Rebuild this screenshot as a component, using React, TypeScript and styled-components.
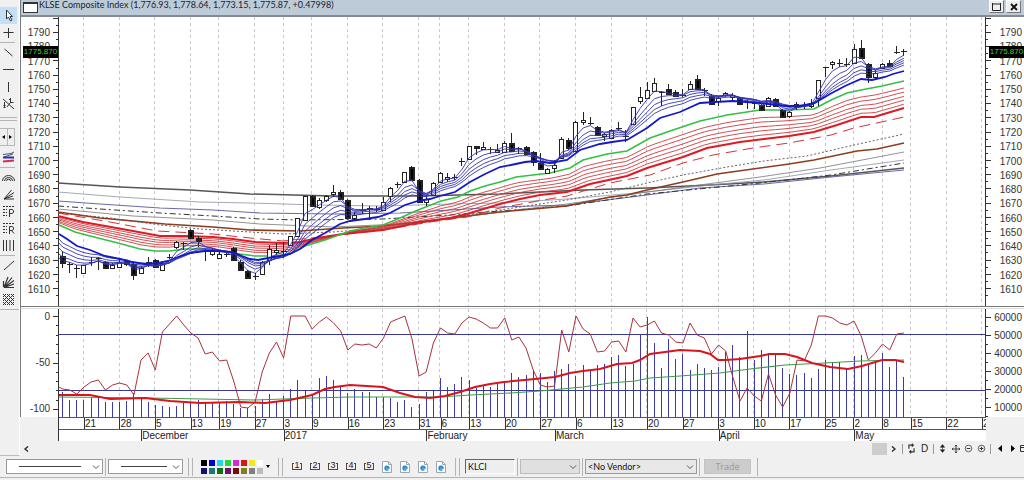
import React from 'react';
import styled, { createGlobalStyle, css } from 'styled-components';

/* ---------- chart data ---------- */

const FIRST_X = 62.6;
const BAR = 7.13;
const xOf = (i: number) => FIRST_X + i * BAR;

// [body top, body bottom, wick top, wick bottom, filled]
type Candle = [number, number, number, number, number];
const candles: Candle[] = [
  [256, 263, 251, 268, 1], [264, 264, 262, 273, 0], [268, 268, 265, 278, 0], [265, 273, 265, 273, 0],
  [262, 262, 257, 266, 0], [258, 258, 257, 270, 0], [262, 268, 261, 269, 1], [265, 268, 263, 269, 0],
  [262, 267, 258, 268, 0], [261, 264, 260, 266, 1], [264, 275, 263, 280, 1], [268, 273, 266, 274, 0],
  [262, 262, 257, 267, 0], [260, 267, 259, 268, 1], [263, 270, 262, 270, 0], [257, 257, 254, 259, 0],
  [242, 247, 241, 249, 0], [243, 244, 242, 250, 0], [230, 238, 229, 239, 1], [238, 241, 236, 247, 1],
  [251, 251, 249, 261, 0], [250, 254, 248, 256, 0], [254, 258, 252, 259, 0], [254, 255, 252, 257, 0],
  [248, 260, 247, 261, 1], [262, 270, 260, 271, 1], [271, 278, 270, 279, 1], [276, 276, 273, 280, 0],
  [262, 274, 261, 275, 0], [249, 260, 245, 265, 0], [250, 252, 243, 255, 0], [251, 251, 242, 258, 0],
  [236, 245, 236, 246, 0], [218, 236, 218, 237, 0], [196, 220, 196, 220, 0], [196, 206, 195, 207, 1],
  [200, 207, 198, 209, 0], [196, 200, 195, 202, 0], [192, 194, 185, 197, 0], [192, 199, 190, 200, 1],
  [200, 218, 199, 219, 1], [215, 218, 212, 221, 0], [210, 210, 203, 214, 0], [208, 208, 206, 220, 0],
  [209, 210, 206, 212, 0], [202, 210, 197, 211, 0], [188, 196, 187, 202, 0], [184, 185, 182, 188, 0],
  [172, 182, 172, 183, 0], [167, 180, 166, 181, 1], [180, 202, 179, 203, 1], [199, 202, 196, 206, 0],
  [183, 195, 182, 196, 0], [173, 182, 172, 183, 0], [177, 179, 173, 182, 0], [177, 178, 174, 180, 0],
  [161, 162, 158, 166, 0], [146, 159, 146, 160, 0], [146, 148, 146, 155, 1], [147, 149, 142, 150, 0],
  [149, 149, 147, 154, 0], [150, 152, 144, 153, 0], [143, 152, 141, 153, 0], [143, 151, 133, 152, 1],
  [148, 149, 147, 154, 0], [147, 154, 146, 155, 1], [152, 162, 151, 166, 1], [163, 169, 153, 170, 1],
  [169, 173, 168, 174, 0], [165, 168, 160, 173, 0], [139, 158, 137, 159, 0], [140, 148, 138, 150, 1],
  [122, 151, 121, 152, 0], [120, 122, 112, 125, 0], [123, 123, 117, 125, 0], [127, 135, 126, 136, 1],
  [134, 136, 133, 141, 0], [130, 138, 129, 138, 0], [128, 129, 122, 131, 0], [136, 137, 130, 142, 0],
  [107, 124, 107, 125, 0], [97, 101, 87, 104, 0], [90, 98, 82, 99, 0], [83, 91, 78, 92, 0],
  [92, 92, 91, 106, 0], [89, 94, 84, 95, 1], [92, 96, 90, 97, 1], [95, 95, 89, 97, 0],
  [84, 89, 81, 90, 0], [79, 89, 75, 90, 1], [90, 90, 88, 96, 0], [96, 104, 94, 104, 1],
  [98, 101, 96, 106, 0], [93, 95, 92, 97, 0], [95, 97, 93, 100, 0], [98, 104, 97, 105, 1],
  [102, 102, 100, 109, 0], [103, 103, 101, 109, 0], [105, 110, 104, 111, 1], [98, 106, 97, 107, 0],
  [99, 106, 98, 107, 1], [110, 117, 109, 117, 1], [112, 116, 111, 118, 0], [104, 107, 102, 110, 0],
  [105, 105, 102, 109, 0], [103, 106, 99, 108, 0], [80, 98, 80, 106, 0], [67, 68, 67, 77, 0],
  [62, 64, 61, 69, 0], [63, 63, 59, 67, 0], [64, 64, 58, 67, 0], [49, 63, 44, 64, 0],
  [48, 58, 40, 59, 1], [64, 77, 63, 83, 1], [73, 77, 70, 79, 0], [64, 68, 63, 69, 0],
  [63, 66, 60, 67, 1], [52, 53, 46, 54, 0], [51, 52, 49, 56, 0],
];

const oscillator = [
  389, 390, 394, 387, 382, 380, 390, 385, 383, 385, 395, 360, 353, 370, 332, 324, 316, 325, 333, 338,
  354, 352, 361, 360, 381, 407, 408, 402, 372, 353, 342, 358, 316, 316, 316, 329, 322, 317, 323, 331,
  350, 344, 345, 344, 348, 338, 322, 319, 316, 339, 376, 372, 343, 328, 333, 334, 323, 317, 319, 323,
  328, 328, 318, 340, 337, 348, 370, 385, 387, 386, 330, 352, 316, 329, 334, 352, 351, 342, 341, 352,
  318, 327, 325, 321, 333, 335, 342, 343, 323, 335, 338, 354, 345, 351, 377, 401, 388, 396, 401, 374,
  395, 407, 393, 360, 361, 345, 316, 316, 318, 323, 325, 321, 336, 360, 353, 344, 350, 334, 333,
];

const volume = [
  392, 400, 400, 400, 398, 396, 402, 402, 402, 401, 393, 397, 402, 405, 406, 407, 406, 403, 402, 400,
  402, 403, 403, 401, 404, 408, 408, 406, 399, 394, 401, 396, 389, 380, 391, 394, 378, 376, 380, 386,
  393, 389, 392, 392, 397, 397, 398, 402, 400, 407, 404, 392, 390, 378, 387, 384, 377, 380, 388, 385,
  387, 384, 382, 373, 377, 375, 370, 373, 382, 371, 369, 364, 376, 365, 371, 365, 364, 357, 355, 366,
  364, 334, 317, 343, 368, 339, 359, 354, 370, 364, 368, 370, 367, 352, 345, 357, 331, 360, 350, 353,
  355, 368, 374, 375, 373, 378, 369, 360, 362, 362, 368, 356, 355, 365, 361, 353, 367, 361, 377,
];

type Points = number[][];

const thickBlue: Points = [
  [59, 234], [67, 239], [77, 246], [90, 250], [105, 256], [120, 259], [132, 262], [145, 264], [158, 263],
  [168, 261], [178, 257], [190, 253], [205, 251], [218, 251], [232, 252], [242, 256], [250, 259], [258, 260],
  [268, 258], [280, 256], [290, 254], [300, 249], [312, 240], [325, 233], [340, 224], [350, 221], [365, 219],
  [378, 217], [390, 213], [405, 205], [418, 201], [430, 199], [440, 196], [455, 192], [470, 182], [485, 174],
  [500, 167], [511, 165], [525, 162], [535, 161], [550, 163], [567, 160], [580, 150], [600, 144], [612, 142],
  [627, 140], [647, 128], [660, 118], [680, 112], [700, 103], [715, 102], [733, 101], [760, 103], [785, 106],
  [800, 106], [815, 103], [830, 94], [845, 86], [861, 79], [872, 80], [885, 77], [893, 74], [904, 71],
];
const green: Points = [
  [59, 225], [75, 232], [90, 236], [118, 243], [140, 249], [155, 251], [170, 251], [185, 249], [200, 249],
  [218, 250], [240, 254], [255, 256], [275, 256], [290, 254], [305, 246], [325, 240], [350, 231], [365, 228],
  [383, 225], [400, 218], [418, 210], [441, 201], [458, 197], [470, 191], [485, 186], [500, 182], [516, 177],
  [533, 175], [550, 173], [570, 168], [583, 160], [607, 154], [627, 151], [650, 138], [673, 130], [700, 121],
  [727, 115], [760, 110], [785, 110], [814, 109], [831, 100], [847, 93], [861, 90], [882, 86], [904, 81],
];
const thickRed: Points = [
  [58, 216], [83, 222], [133, 231], [160, 236], [187, 236], [213, 237], [233, 239], [255, 242], [283, 243],
  [300, 242], [317, 238], [343, 234], [383, 230], [417, 223], [450, 218], [467, 214], [500, 204], [520, 199],
  [540, 195], [567, 192], [590, 184], [627, 176], [647, 168], [683, 157], [707, 148], [740, 142], [764, 139],
  [789, 136], [814, 132], [837, 125], [861, 117], [874, 117], [904, 108],
];
const dashedRed: Points = [
  [58, 213], [110, 222], [157, 231], [213, 234], [250, 238], [283, 241], [330, 236], [383, 230], [430, 222],
  [467, 217], [500, 208], [543, 200], [567, 196], [610, 183], [650, 175], [683, 163], [713, 155], [753, 148],
  [789, 143], [831, 135], [854, 128], [904, 117],
];
const dotted: Points = [
  [58, 213], [110, 218], [160, 225], [200, 229], [250, 232], [283, 234], [333, 232], [383, 228], [417, 223],
  [500, 210], [567, 200], [610, 192], [647, 183], [683, 175], [727, 167], [764, 161], [807, 156], [854, 145],
  [904, 134],
];
const brown: Points = [
  [58, 212], [100, 218], [133, 221], [165, 224], [213, 227], [250, 230], [300, 231], [343, 228], [383, 226],
  [417, 222], [500, 212], [567, 206], [610, 197], [627, 195], [647, 190], [683, 182], [717, 174], [760, 168],
  [789, 164], [814, 160], [857, 151], [877, 149], [904, 143],
];
const darkGray: Points = [
  [58, 183], [120, 187], [190, 190], [250, 194], [333, 196], [417, 196], [500, 194], [583, 190], [647, 188],
  [710, 185], [764, 182], [831, 176], [904, 168],
];
const slateThin: Points = [
  [58, 192], [120, 197], [200, 202], [250, 203], [317, 205], [383, 206], [450, 204], [500, 203], [567, 199],
  [647, 192], [710, 185], [764, 180], [831, 170], [904, 160],
];
const purple: Points = [
  [58, 201], [100, 204], [160, 208], [213, 210], [260, 213], [333, 214], [400, 213], [450, 210], [500, 207],
  [567, 205], [647, 195], [700, 188], [764, 184], [831, 177], [904, 170],
];
const dashDot: Points = [
  [58, 206], [100, 209], [160, 213], [213, 216], [260, 219], [300, 220], [383, 219], [450, 215], [500, 211],
  [567, 206], [647, 194], [760, 183], [831, 175], [904, 163],
];
const grayThin: Points = [
  [58, 209], [133, 216], [213, 220], [260, 224], [333, 227], [400, 224], [450, 219], [500, 212], [567, 204],
  [647, 192], [760, 177], [820, 168], [904, 152],
];
const volumeRed: Points = [
  [59, 395], [90, 395], [110, 399], [145, 398], [170, 401], [200, 403], [240, 402], [265, 403], [290, 400],
  [312, 395], [325, 389], [335, 387], [350, 385], [383, 387], [400, 393], [415, 397], [430, 398], [445, 396],
  [460, 392], [475, 387], [490, 384], [504, 382], [535, 379], [555, 377], [570, 373], [583, 371], [600, 369],
  [617, 364], [632, 363], [640, 360], [650, 354], [665, 352], [680, 350], [700, 351], [710, 354], [718, 360],
  [726, 360], [740, 359], [760, 356], [770, 354], [785, 354], [797, 357], [812, 363], [830, 367], [848, 369],
  [862, 366], [882, 360], [895, 360], [904, 362],
];
const volumeGreen: Points = [
  [59, 397], [150, 398], [255, 400], [312, 398], [350, 397], [440, 397], [470, 395], [511, 393], [540, 391],
  [583, 387], [610, 383], [635, 381], [650, 378], [680, 376], [720, 373], [750, 369], [785, 365], [825, 363],
  [860, 361], [904, 360],
];

const at = (pts: Points, x: number) => {
  for (let i = 1; i < pts.length; i++) {
    if (x <= pts[i][0]) {
      const [x0, y0] = pts[i - 1];
      const [x1, y1] = pts[i];
      return y0 + ((y1 - y0) * (x - x0)) / (x1 - x0);
    }
  }
  return pts[pts.length - 1][1];
};
const line = (pts: Points) => pts.map(([x, y]) => `${x.toFixed(1)},${y.toFixed(1)}`).join(' ');
const between = (a: Points, b: Points, f: number) =>
  line([59, ...candles.map((_, i) => xOf(i))].map((x) => [x, at(a, x) * (1 - f) + at(b, x) * f]));
const average = (period: number, seed: number) => {
  let value = seed;
  const k = 2 / (period + 1);
  return line([
    [59, seed],
    ...candles.map((c, i) => {
      value += ((c[4] ? c[1] : c[0]) - value) * k;
      return [xOf(i), value];
    }),
  ]);
};

const weeks: [number, string][] = [
  [3, '21'], [8, '28'], [13, '5'], [18, '13'], [22, '19'], [27, '27'], [31, '3'], [35, '9'], [40, '16'],
  [45, '23'], [50, '31'], [53, '6'], [57, '13'], [62, '20'], [67, '27'], [72, '6'], [77, '13'], [82, '20'],
  [87, '27'], [92, '3'], [97, '10'], [102, '17'], [107, '25'], [111, '2'], [115, '8'], [119, '15'],
  [124, '22'], [129, '29'],
];
const months: [number, string][] = [
  [11, 'December'], [31, '2017'], [51, 'February'], [69, 'March'], [92, 'April'], [111, 'May'],
];
const AXIS_START = -0.6;
const AXIS_END = 129.45;

const prices = Array.from({ length: 19 }, (_, i) => 1790 - i * 10);
const volumes = [60000, 50000, 40000, 30000, 20000, 10000];

/* ---------- styles ---------- */

const GlobalStyle = createGlobalStyle`
  *, *::before, *::after { box-sizing: border-box; }
  body { margin: 0; background: #f0f0f0; color: #222; font: 10px/12px "Liberation Sans", Arial, sans-serif; }
  button, input, select { font: inherit; color: inherit; margin: 0; padding: 0; border-radius: 0; }
  svg { display: block; }
`;

const Page = styled.div`
  display: flex;
  flex-direction: column;
  min-height: 100vh;
`;
const Workspace = styled.div`
  display: flex;
`;
const ToolRail = styled.nav`
  display: flex;
  flex: none;
  flex-direction: column;
  width: 20px;
  padding-top: 7px;
  border-right: 1px solid #fff;
  border-bottom: 1px solid #bcbcbc;
`;
const RailButton = styled.button<{ $active?: boolean }>`
  display: flex;
  align-items: center;
  justify-content: center;
  width: 17px;
  height: 17px;
  border: 0;
  background: ${(p) => (p.$active ? '#c4e0f7' : 'transparent')};
`;
const RailRule = styled.hr<{ $wide?: boolean }>`
  width: ${(p) => (p.$wide ? '19px' : '15px')};
  height: 1px;
  margin: 1px 0;
  border: 0;
  background: #b4b4b4;
`;
const RailBreak = styled.div`
  height: 4px;
  margin: 5px 0 7px;
  width: 17px;
  border: solid #b4b4b4;
  border-width: 1px 0;
`;
const Pager = styled.div`
  display: flex;
  height: 18px;
  width: 15px;
  margin-bottom: 3px;
  border: 1px solid #b8b8b8;
  border-left: 0;
`;
const PagerButton = styled.button`
  display: flex;
  flex: 1;
  align-items: center;
  justify-content: center;
  border: 0;
  background: #eee;
  & + & { border-left: 1px solid #b8b8b8; }
`;

const ChartWindow = styled.main`
  display: flex;
  flex: 1;
  flex-direction: column;
  min-width: 0;
`;
const TitleBar = styled.header`
  display: flex;
  align-items: center;
  height: 17px;
  padding: 0 3px 2px 2px;
  border-bottom: 2px solid #858b92;
  border-left: 1px solid #777;
  background: #bdcbd9;
`;
const WindowGlyph = styled.span`
  width: 15px;
  height: 11px;
  margin-top: 1px;
  border: 1px solid #333;
  border-top-width: 2px;
  background: #fff;
`;
const Title = styled.h1`
  flex: 1;
  margin: 0 0 3px 1px;
  color: #1c2228;
  font: 400 9px/12px Lato, "Noto Sans", sans-serif;
  white-space: nowrap;
`;
const TitleButton = styled.button`
  display: flex;
  align-items: center;
  justify-content: center;
  width: 15px;
  height: 13px;
  margin-left: 2px;
  border: 1px solid;
  border-color: #fff #777 #777 #fff;
  background: #eee;
`;

const Pane = styled.section<{ $h: number }>`
  display: flex;
  height: ${(p) => p.$h}px;
  border-left: 1px solid #777;
  background: #fff;
`;
const PaneRule = styled.div`
  height: 3px;
  border: solid #777;
  border-width: 1px 0 1px 1px;
  border-bottom-color: #ddd;
  background: #fff;
`;
const Scale = styled.div<{ $side: 'left' | 'right'; $pad: number }>`
  position: relative;
  display: flex;
  flex: none;
  flex-direction: column;
  justify-content: space-between;
  width: ${(p) => (p.$side === 'left' ? 31 : 32)}px;
  padding: ${(p) => p.$pad}px 2px;
  text-align: right;
  color: #333;
`;
const ScaleLabel = styled.span<{ $fill?: boolean }>`
  display: flex;
  flex: ${(p) => (p.$fill ? '1' : 'none')};
  height: 14px;
  min-height: 0;
  align-items: center;
  justify-content: flex-end;
`;
const LastPrice = styled.output<{ $side: 'left' | 'right' }>`
  position: absolute;
  z-index: 1;
  top: 29px;
  left: ${(p) => (p.$side === 'left' ? '2px' : '-3px')};
  width: 35px;
  height: 12px;
  background: #000;
  color: #3ad03a;
  font-size: 8px;
  line-height: 12px;
  text-align: center;
`;
const Plot = styled.svg`
  flex: 1;
  min-width: 0;
  height: 100%;
  polyline, line, rect, path { vector-effect: non-scaling-stroke; }
`;

const DateAxis = styled.div`
  margin: 0 38px;
  border-left: 1px solid #333;
  background: #fff;
`;
const DateRow = styled.div<{ $ruled?: boolean }>`
  display: flex;
  height: 11px;
  ${(p) => p.$ruled && css`
    border: solid #555;
    border-width: 1px 0;
    height: 13px;
  `}
`;
const DateCell = styled.span<{ $span: number; $blank?: boolean }>`
  flex: ${(p) => p.$span} 1 0;
  min-width: 0;
  overflow: hidden;
  border-left: ${(p) => (p.$blank ? '0' : '1px solid #333')};
  line-height: 12px;
  white-space: nowrap;
`;

const ScrollRow = styled.div`
  display: flex;
  align-items: center;
  height: 15px;
  overflow: hidden;
`;
const TinyButton = styled.button<{ $narrow?: boolean }>`
  display: flex;
  flex: none;
  align-items: center;
  justify-content: center;
  width: ${(p) => (p.$narrow ? 10 : 13)}px;
  height: 13px;
  border: 0;
  background: transparent;
`;
const Track = styled.div`
  display: flex;
  flex: 1;
  justify-content: flex-end;
`;
const Thumb = styled.div`
  width: 15px;
  height: 12px;
  background: #cdcdcd;
`;
const TinyRule = styled.span`
  flex: none;
  width: 1px;
  height: 10px;
  margin: 0 2px;
  background: #999;
`;

const BottomBar = styled.footer`
  display: flex;
  align-items: center;
  height: 22px;
  padding-left: 6px;
  border-bottom: 1px solid #b4b4b4;
  white-space: nowrap;
`;
const Field = styled.label<{ $w: number }>`
  position: relative;
  display: flex;
  flex: none;
  width: ${(p) => p.$w}px;
  height: 15px;
`;
const Select = styled.select<{ $line?: number; $muted?: boolean }>`
  appearance: none;
  width: 100%;
  border: 1px solid ${(p) => (p.$muted ? '#bbb' : '#999')};
  background: ${(p) => (p.$muted ? '#e0e0e0' : p.$line ? '#fff' : '#e8e8e8')};
  && {
    padding: 0 16px 0 2px;
    color: #111;
    font: 9px/12px Lato, "Noto Sans", sans-serif;
  }
  ${(p) => p.$line && css`
    background-image: linear-gradient(#444, #444);
    background-repeat: no-repeat;
    background-size: ${p.$line}px 1px;
    background-position: 12px 6px;
  `}
`;
const FieldArrow = styled.svg`
  position: absolute;
  top: 6px;
  right: 3px;
  pointer-events: none;
`;
const SymbolInput = styled.input`
  width: 100%;
  border: 1px solid;
  border-color: #666 #fff #fff #666;
  background: #eee;
  && {
    padding-left: 2px;
    color: #111;
    font: 9px/12px Lato, "Noto Sans", sans-serif;
  }
`;
const BarRule = styled.span<{ $double?: boolean }>`
  flex: none;
  width: ${(p) => (p.$double ? 5 : 1)}px;
  height: 18px;
  margin: 0 ${(p) => (p.$double ? 5 : 2)}px;
  border: solid #b4b4b4;
  border-width: 0 ${(p) => (p.$double ? 1 : 0)}px 0 1px;
`;
const Palette = styled.div`
  display: grid;
  flex: none;
  grid-template-columns: repeat(8, 6px);
  gap: 2px;
  margin-left: 3px;
`;
const Swatch = styled.button<{ $c: string }>`
  width: 6px;
  height: 6px;
  border: 0;
  background: ${(p) => p.$c};
`;
const MarkButton = styled.button`
  display: flex;
  flex: none;
  align-items: center;
  justify-content: center;
  width: 18px;
  height: 18px;
  border: 0;
  background: transparent;
`;
const Bracket = styled.span`
  width: 10px;
  height: 7px;
  border: solid #544;
  border-width: 0 1px 1px;
  background:
    linear-gradient(#544, #544) 0 0 / 1px 1px no-repeat,
    linear-gradient(#544, #544) 100% 0 / 1px 1px no-repeat;
  color: #311;
  font-size: 9px;
  line-height: 4px;
`;
const TradeButton = styled.button`
  width: 47px;
  height: 15px;
  margin: 0 4px 0 2px;
  border: 1px solid #c4c4c4;
  background: #ccc;
  && {
    color: #9a9a9a;
    font: 9px/12px "Open Sans", "Noto Sans", sans-serif;
  }
`;

/* ---------- icons ---------- */

const Icon = ({ children, size = 15 }: { children: React.ReactNode; size?: number }) => (
  <svg width={size} height={size} viewBox="0 0 15 15" fill="none" stroke="#333" strokeWidth="1" aria-hidden="true">
    {children}
  </svg>
);
const icons = {
  pointer: <path d="M5.5 2v9l2-2 2 4 1.500-1-2-3.500h2.500z" fill="#fff" />,
  cross: <path d="M7.500 3v10M2.500 7.500h10" />,
  diagonal: <path d="M3.500 4l8 7" />,
  horizontal: <path d="M2 7.500h11" />,
  vertical: <path d="M7.500 3v10" />,
  anchor: <path d="M2 3l11 10M3.500 6v6M2.500 9.500h2M2.500 11.500h2M9.500 2v5M8 3.500h2M9.500 6.500h3M6 11l3-4" />,
  bands: (
    <>
      <path d="M2 4.500l8-1 3-1.500M3 7l9-3" stroke="#456" />
      <path d="M2 7.500h11" stroke="#2233c4" strokeWidth="2" />
      <path d="M2 11.500l11-1" stroke="#d3304b" strokeWidth="2" />
    </>
  ),
  arcs: <path d="M1.500 11a6 5.500 0 0 1 12 0M3.500 11a4 3.500 0 0 1 8 0M5.500 11a2 1.800 0 0 1 4 0" />,
  fan: <path d="M3 12L10.500 3M3 12l10-6.500M3 12h10M3 12l9-3" />,
  retraceP: (
    <>
      <path d="M2 2.500h11M2 5.500h4M2 8.500h4M2 11.500h4" strokeDasharray="2 1" />
      <path d="M8.500 13V5.500h2.500l1.500 1v2l-1.500 1h-2" />
    </>
  ),
  retraceR: (
    <>
      <path d="M2 2.500h11M2 5.500h4M2 8.500h4M2 11.500h4" strokeDasharray="2 1" />
      <path d="M8.500 13V5.500h2.500l1.500 1v2l-1.500 1h-2M10.500 9.500l2.500 3" />
    </>
  ),
  cycles: <path d="M2.500 2v11M5.500 2v11M9 2v11M12.500 2v11" />,
  trend: <path d="M3 12l10-9" />,
  fanDark: <path d="M3 12.500L7 2M3 12.500L11 2.500M3 12.500l10-7M3 12.500h10M3 12.500l10-3.500M2.500 6v6" strokeWidth="1.200" />,
  mesh: <path d="M2 2l11 11M2 6l7 7M2 10l3 3M6 2l7 7M10 2l3 3M13 2L2 13M13 6l-7 7M13 10l-3 3M9 2L2 9M5 2L2 5" />,
};

const railTop: [string, React.ReactNode][] = [['Select', icons.pointer], ['Crosshair', icons.cross]];
const railLines: [string, React.ReactNode][] = [
  ['Trendline', icons.diagonal], ['Horizontal line', icons.horizontal],
  ['Vertical line', icons.vertical], ['Anchored line', icons.anchor],
];
const railStudies: [string, React.ReactNode][] = [
  ['Arcs', icons.arcs], ['Fan', icons.fan], ['Projection', icons.retraceP],
  ['Retracement', icons.retraceR], ['Time zones', icons.cycles],
];
const railGann: [string, React.ReactNode][] = [
  ['Gann line', icons.trend], ['Gann fan', icons.fanDark], ['Gann grid', icons.mesh],
];

const RailGroup = ({ items, active }: { items: [string, React.ReactNode][]; active?: string }) => (
  <>
    {items.map(([name, icon]) => (
      <RailButton key={name} type="button" aria-label={name} $active={name === active}>
        <Icon>{icon}</Icon>
      </RailButton>
    ))}
  </>
);

const Chevron = () => (
  <FieldArrow width="8" height="5" viewBox="0 0 8 5" fill="none" stroke="#555" aria-hidden="true">
    <path d="M1 .5l3 3 3-3" />
  </FieldArrow>
);

const WebPage = () => (
  <svg width="10" height="12" viewBox="0 0 10 12" fill="none" aria-hidden="true">
    <path d="M.5 .5h6l3 3v8h-9z" fill="#fff" stroke="#9aa6b0" />
    <path d="M6.500 .5v3h3" stroke="#9aa6b0" />
    <path d="M3 7h4a2 2 0 1 0-.6 1.600" stroke="#1b86cc" strokeWidth="1.400" />
  </svg>
);

/* ---------- chart ---------- */

const Grid = ({ top, bottom }: { top: number; bottom: number }) => (
  <g stroke="#c8c8c8" strokeDasharray="3 3">
    {weeks.map(([i]) => (
      <line key={i} x1={Math.round(xOf(i)) - 0.5} x2={Math.round(xOf(i)) - 0.5} y1={top} y2={bottom} />
    ))}
  </g>
);

const PricePlot = () => (
  <Plot viewBox="52 17 940 289" preserveAspectRatio="none" fill="none" role="img" aria-label="Price chart">
    <Grid top={17} bottom={306} />
    <g stroke="#333">
      <path d="M58.500 17V306M985.500 17V306" />
      {Array.from({ length: 40 }, (_, i) => {
        const y = Math.round(18.8 + i * 7.111) - 0.5;
        const len = i % 2 ? 2 : 5;
        return <path key={i} d={`M${58 - len} ${y}H58M986 ${y}h${len}`} />;
      })}
    </g>
    <polyline points={line(darkGray)} stroke="#555" strokeWidth="1.500" />
    <polyline points={line(slateThin)} stroke="#8a93a3" strokeWidth=".8" />
    <polyline points={line(purple)} stroke="#6a6aa8" strokeWidth="1.200" />
    <polyline points={line(dashDot)} stroke="#333" strokeDasharray="6 3 2 3" />
    <polyline points={line(grayThin)} stroke="#777" strokeWidth=".8" />
    <polyline points={line(dotted)} stroke="#666" strokeDasharray="2 2" />
    <polyline points={line(brown)} stroke="#8c3d1e" strokeWidth="1.600" />
    <polyline points={line(dashedRed)} stroke="#cf3540" strokeDasharray="11 6" />
    {[0.26, 0.41, 0.57, 0.71, 0.86].map((f) => (
      <polyline key={f} points={between(green, thickRed, f)} stroke="#cc3a40" strokeWidth=".9" />
    ))}
    <polyline points={line(thickRed)} stroke="#dc1c24" strokeWidth="2" />
    <polyline points={line(green)} stroke="#35c043" strokeWidth="1.600" />
    <g stroke="#222" shapeRendering="crispEdges">
      {candles.map(([top, bottom, high, low, filled], i) => {
        const x = Math.round(xOf(i) - 0.5) + 0.5;
        const flat = bottom - top < 2;
        return (
          <g key={i}>
            <path d={`M${x} ${high}V${low}`} />
            {flat ? (
              <path d={`M${x - 3} ${top + 0.5}h6`} />
            ) : (
              <rect
                x={x - 2}
                y={top + 0.5}
                width="4"
                height={filled ? bottom - top - 1 : bottom - top}
                fill={filled ? '#000' : '#fff'}
                strokeWidth={filled ? 2 : 1}
              />
            )}
          </g>
        );
      })}
    </g>
    {[[3, 258], [5, 254], [7, 248], [9, 243], [11, 239]].map(([period, seed]) => (
      <polyline key={period} points={average(period, seed)} stroke="#3434b0" strokeWidth=".9" />
    ))}
    <polyline points={line(thickBlue)} stroke="#1418c8" strokeWidth="1.800" />
  </Plot>
);

const VolumePlot = () => (
  <Plot viewBox="52 309 940 108" preserveAspectRatio="none" fill="none" role="img" aria-label="Volume chart">
    <Grid top={309} bottom={417} />
    <g stroke="#333">
      <path d="M58.500 309V417M985.500 309V417" />
      {Array.from({ length: 11 }, (_, i) => (
        <path key={i} d={`M58 ${Math.round(316 + i * 9.3) + 0.5}h${i % 5 ? -2 : -5}`} />
      ))}
      {Array.from({ length: 12 }, (_, i) => (
        <path key={i} d={`M986 ${Math.round(316.5 + i * 9.05) + 0.5}h${i % 2 ? 2 : 5}`} />
      ))}
    </g>
    <path d="M59 334.500H985M59 390.500H985" stroke="#3a3a96" />
    <g stroke="#3c3ca4">
      {volume.map((y, i) => {
        const x = Math.round(xOf(i) - 0.5) + 0.5;
        return <path key={i} d={`M${x} ${y}V417`} />;
      })}
    </g>
    <polyline points={line(volumeGreen)} stroke="#3f9a4a" strokeWidth="1.100" />
    <polyline points={line([[59, 387], ...oscillator.map((y, i) => [xOf(i), y])])} stroke="#a8323c" />
    <polyline points={line(volumeRed)} stroke="#d8141c" strokeWidth="2" />
  </Plot>
);

const DateStrip = ({ items, ruled }: { items: [number, string][]; ruled?: boolean }) => (
  <DateRow $ruled={ruled}>
    <DateCell $blank $span={items[0][0] - AXIS_START} />
    {items.map(([i, text], n) => (
      <DateCell key={i} $span={(items[n + 1]?.[0] ?? AXIS_END) - i}>{text}</DateCell>
    ))}
  </DateRow>
);

const swatches = [
  '#000000', '#0000d0', '#22d8e8', '#22d83a', '#d828d8', '#d81818', '#f4e81c', '#ffffff',
  '#101070', '#187878', '#107018', '#701070', '#701010', '#80801c', '#808080', '#bcbcbc',
];

export default function App() {
  return (
    <Page>
      <GlobalStyle />
      <Workspace>
        <ToolRail aria-label="Drawing tools">
          <RailGroup items={railTop} active="Select" />
          <RailRule />
          <RailGroup items={railLines} />
          <RailBreak />
          <Pager>
            <PagerButton type="button" aria-label="Previous">
              <svg width="3" height="4" viewBox="0 0 3 4"><path d="M3 0v4L0 2z" /></svg>
            </PagerButton>
            <PagerButton type="button" aria-label="Next">
              <svg width="3" height="4" viewBox="0 0 3 4"><path d="M0 0v4l3-2z" /></svg>
            </PagerButton>
          </Pager>
          <RailGroup items={[['Bands', icons.bands]]} />
          <RailRule />
          <RailGroup items={railStudies} />
          <RailRule />
          <RailGroup items={railGann} />
          <RailRule $wide />
        </ToolRail>

        <ChartWindow>
          <TitleBar>
            <WindowGlyph />
            <Title>KLSE Composite Index (1,776.93, 1,778.64, 1,773.15, 1,775.87, +0.47998)</Title>
            <TitleButton type="button" aria-label="Maximize">
              <svg width="9" height="8" viewBox="0 0 9 8" fill="none" stroke="#222"><path d="M.5 1h8M.5 0v7.500h8V0" /></svg>
            </TitleButton>
            <TitleButton type="button" aria-label="Close">
              <svg width="8" height="8" viewBox="0 0 8 8" stroke="#111" strokeWidth="1.800"><path d="M1 1l6 6M7 1L1 7" /></svg>
            </TitleButton>
          </TitleBar>

          <Pane $h={289}>
            <Scale $side="left" $pad={9}>
              {prices.map((p) => <ScaleLabel key={p} $fill>{p}</ScaleLabel>)}
              <LastPrice $side="left">1775.870</LastPrice>
            </Scale>
            <PricePlot />
            <Scale $side="right" $pad={9}>
              {prices.map((p) => <ScaleLabel key={p} $fill>{p}</ScaleLabel>)}
              <LastPrice $side="right">1775.870</LastPrice>
            </Scale>
          </Pane>
          <PaneRule />
          <Pane $h={108}>
            <Scale $side="left" $pad={1}>
              {['0', '-50', '-100'].map((p) => <ScaleLabel key={p}>{p}</ScaleLabel>)}
            </Scale>
            <VolumePlot />
            <Scale $side="right" $pad={0}>
              {volumes.map((p) => <ScaleLabel key={p} $fill>{p}</ScaleLabel>)}
            </Scale>
          </Pane>

          <DateAxis>
            <DateStrip items={weeks} ruled />
            <DateStrip items={months} />
          </DateAxis>

          <ScrollRow>
            <TinyButton type="button" aria-label="Scroll left">
              <svg width="5" height="6" viewBox="0 0 5 6" fill="none" stroke="#222" strokeWidth="1.300"><path d="M4 .5L1 3l3 2.500" /></svg>
            </TinyButton>
            <Track><Thumb /></Track>
            <TinyButton type="button" aria-label="Scroll right">
              <svg width="5" height="6" viewBox="0 0 5 6" fill="none" stroke="#222" strokeWidth="1.300"><path d="M1 .5L4 3 1 5.500" /></svg>
            </TinyButton>
            <TinyRule />
            <TinyButton type="button" aria-label="Refresh">
              <Icon size={11}><path d="M4 8V3h6M8 1l2 2-2 2M11 7v5H5M7 10l-2 2 2 2" strokeWidth="1.600" /></Icon>
            </TinyButton>
            <TinyButton type="button" aria-label="Daily">D</TinyButton>
            <TinyRule />
            <TinyButton type="button" aria-label="Fit height">
              <Icon size={9}><path d="M7.500 1L11 5.500H4zM7.500 14L4 9.500h7zM7.500 4v7" fill="#111" /></Icon>
            </TinyButton>
            <TinyButton type="button" aria-label="Pan">
              <Icon size={10}><path d="M7.500 2v11M2 7.500h11M6 3.500l1.500-2 1.500 2M6 11.500l1.500 2 1.500-2M3.500 6l-2 1.500 2 1.500M11.500 6l2 1.500-2 1.500" strokeWidth="1.400" /></Icon>
            </TinyButton>
            <TinyButton type="button" aria-label="Zoom out">
              <Icon size={11}><circle cx="7.500" cy="7.500" r="4.500" /><path d="M5 7.500h5" strokeWidth="1.400" /></Icon>
            </TinyButton>
            <TinyButton type="button" aria-label="Zoom in">
              <Icon size={11}><circle cx="7.500" cy="7.500" r="4.500" /><path d="M5 7.500h5M7.500 5v5" strokeWidth="1.400" /></Icon>
            </TinyButton>
            <TinyRule />
            <TinyButton type="button" aria-label="Previous chart">
              <svg width="4" height="7" viewBox="0 0 4 7"><path d="M4 0v7L0 3.500z" /></svg>
            </TinyButton>
            <TinyButton type="button" aria-label="Next chart">
              <svg width="4" height="7" viewBox="0 0 4 7"><path d="M0 0v7l4-3.500z" /></svg>
            </TinyButton>
            <svg width="5" height="7" viewBox="0 0 5 7" fill="none" stroke="#333"><path d="M5 .5H1.500v6H5M2 2.500h3" /></svg>
          </ScrollRow>
        </ChartWindow>
      </Workspace>

      <BottomBar>
        <Field $w={97}>
          <Select aria-label="Line style" $line={62}><option aria-label="Solid" /></Select>
          <Chevron />
        </Field>
        <BarRule />
        <Field $w={75}>
          <Select aria-label="Line weight" $line={46}><option aria-label="Thin" /></Select>
          <Chevron />
        </Field>
        <BarRule $double />
        <Palette>
          {swatches.map((c) => <Swatch key={c} type="button" $c={c} aria-label={`Color ${c}`} />)}
        </Palette>
        <TinyButton $narrow type="button" aria-label="More colors">
          <svg width="4" height="3" viewBox="0 0 4 3"><path d="M0 0h4L2 3z" /></svg>
        </TinyButton>
        <BarRule $double />
        {[1, 2, 3, 4, 5].map((n) => (
          <MarkButton key={n} type="button" aria-label={`Layout ${n}`}><Bracket>{n}</Bracket></MarkButton>
        ))}
        {[1, 2, 3, 4].map((n) => (
          <MarkButton key={n} type="button" aria-label={`Web page ${n}`}><WebPage /></MarkButton>
        ))}
        <BarRule $double />
        <Field $w={50}>
          <SymbolInput aria-label="Symbol" defaultValue="KLCI" />
        </Field>
        <BarRule />
        <Field $w={60}>
          <Select aria-label="Account" $muted><option aria-label="None" /></Select>
          <Chevron />
        </Field>
        <BarRule />
        <Field $w={112}>
          <Select aria-label="Vendor"><option>&lt;No Vendor&gt;</option></Select>
          <Chevron />
        </Field>
        <BarRule />
        <TradeButton type="button">Trade</TradeButton>
        <BarRule />
      </BottomBar>
    </Page>
  );
}
